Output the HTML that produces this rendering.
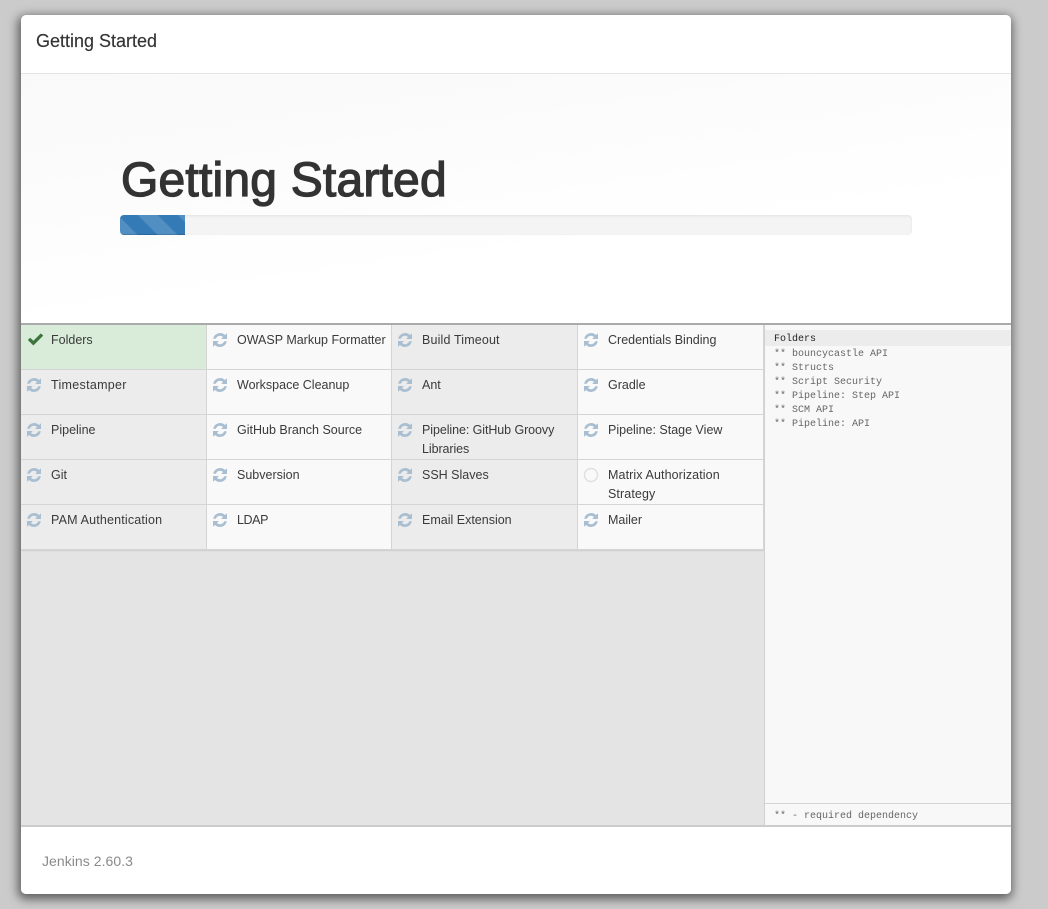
<!DOCTYPE html>
<html><head><meta charset="utf-8"><title>Getting Started</title>
<style>
*{box-sizing:border-box}
html,body{margin:0;padding:0;width:1048px;height:909px;overflow:hidden;background:#cbcbcb;font-family:"Liberation Sans",sans-serif}
#m{position:absolute;left:21px;top:15px;width:990px;height:879px;background:#fff;border-radius:5px;box-shadow:-1px 3px 10px 2px rgba(0,0,0,.55);overflow:hidden}
#hd{position:absolute;left:0;top:0;width:990px;height:59px;border-bottom:1px solid #e5e5e5;font-size:18px;color:#333;line-height:53px;padding-left:15px;-webkit-text-stroke:.15px #333}
#gr{position:absolute;left:0;top:59px;width:990px;height:249px;background:linear-gradient(172deg,#f9f9f9 0,#fbfbfb 25%,#fff 65%,#fff 100%)}
h1{position:absolute;left:100px;top:139px;margin:0;font-size:48px;line-height:54px;font-weight:normal;-webkit-text-stroke:1.300px #333;color:#333;letter-spacing:.2px;white-space:nowrap}
#pb{position:absolute;left:99px;top:200px;width:792px;height:20px;background:#f4f4f4;border-radius:4px;box-shadow:inset 0 1px 2px rgba(0,0,0,.08);overflow:hidden}
#pb div{width:65px;height:20px;background-color:#337ab7;background-image:linear-gradient(45deg,rgba(255,255,255,.15) 25%,transparent 25%,transparent 50%,rgba(255,255,255,.15) 50%,rgba(255,255,255,.15) 75%,transparent 75%,transparent);background-size:40px 40px;background-position:18px 0;box-shadow:inset 0 -1px 0 rgba(0,0,0,.15)}
#st{position:absolute;left:0;top:308px;width:990px;height:503px;background:#e4e4e4;border-top:2px solid #aaa}
.c{position:absolute;height:45px;border-right:1px solid #d5d5d5;border-bottom:1px solid #d5d5d5;font-size:12.5px;line-height:19px;color:#3a3a3a}
.o{background:#ececec}.e{background:#f9f9f9}.g{background:#d9ecd9}
.c span{position:absolute;left:30px;top:5.500px;white-space:nowrap}
.c svg{position:absolute;left:4.500px;top:7px}
#lg{position:absolute;left:743px;top:0;width:247px;height:501px;background:#f8f8f8;border-left:1px solid #d0d0d0;font-family:"Liberation Mono",monospace;font-size:10px;line-height:14px;color:#666}
#lg div{padding-left:9px;white-space:nowrap;height:14px;position:relative;top:6px}
#lg .h{background:#ececec;color:#222;height:16px;line-height:20px;margin-top:1px;top:4px}
#lg #rq{position:absolute;left:0;top:478px;width:246px;height:23px;border-top:1px solid #d4d4d4;line-height:26px}
#ft{position:absolute;left:0;top:810px;width:990px;height:69px;background:#fff;border-top:2px solid #ccc;font-size:14px;color:#8a8a8a;line-height:69px;padding-left:21px;letter-spacing:.05px}
</style></head><body>
<svg width="0" height="0" style="position:absolute"><defs>
<symbol id="r" viewBox="0 0 16 16"><path d="M1.200 6.800A7 7 0 0 1 13 3L15 1.200V7H9.200L11 5A4.400 4.400 0 0 0 3.800 6.800Z M14.800 9.200A7 7 0 0 1 3 13L1 14.800V9H6.800L5 11A4.400 4.400 0 0 0 12.200 9.200Z" fill="#a9bfd1"/></symbol>
</defs></svg>
<div id="m">
<div id="hd">Getting Started</div>
<div id="gr"></div>
<h1>Getting Started</h1>
<div id="pb"><div></div></div>
<div id="st">
<div class="c g" style="left:0;top:0;width:186px"><svg width="17" height="17" viewBox="0 0 16 16" style="left:5.500px;top:6px"><path d="M.800 8.500 6 13.700 15.300 4.300 13 2.200 6 9.200 3 6.300Z" fill="#3c763d"/></svg><span>Folders</span></div>
<div class="c e" style="left:186px;top:0;width:185px"><svg width="16" height="16"><use href="#r"/></svg><span>OWASP Markup Formatter</span></div>
<div class="c o" style="left:371px;top:0;width:186px"><svg width="16" height="16"><use href="#r"/></svg><span style="letter-spacing:.15px">Build Timeout</span></div>
<div class="c e" style="left:557px;top:0;width:186px"><svg width="16" height="16"><use href="#r"/></svg><span>Credentials Binding</span></div>
<div class="c o" style="left:0;top:45px;width:186px"><svg width="16" height="16"><use href="#r"/></svg><span style="letter-spacing:.3px">Timestamper</span></div>
<div class="c e" style="left:186px;top:45px;width:185px"><svg width="16" height="16"><use href="#r"/></svg><span>Workspace Cleanup</span></div>
<div class="c o" style="left:371px;top:45px;width:186px"><svg width="16" height="16"><use href="#r"/></svg><span>Ant</span></div>
<div class="c e" style="left:557px;top:45px;width:186px"><svg width="16" height="16"><use href="#r"/></svg><span>Gradle</span></div>
<div class="c o" style="left:0;top:90px;width:186px"><svg width="16" height="16"><use href="#r"/></svg><span>Pipeline</span></div>
<div class="c e" style="left:186px;top:90px;width:185px"><svg width="16" height="16"><use href="#r"/></svg><span>GitHub Branch Source</span></div>
<div class="c o" style="left:371px;top:90px;width:186px"><svg width="16" height="16"><use href="#r"/></svg><span style="letter-spacing:-.08px">Pipeline: GitHub Groovy<br>Libraries</span></div>
<div class="c e" style="left:557px;top:90px;width:186px"><svg width="16" height="16"><use href="#r"/></svg><span>Pipeline: Stage View</span></div>
<div class="c o" style="left:0;top:135px;width:186px"><svg width="16" height="16"><use href="#r"/></svg><span>Git</span></div>
<div class="c e" style="left:186px;top:135px;width:185px"><svg width="16" height="16"><use href="#r"/></svg><span>Subversion</span></div>
<div class="c o" style="left:371px;top:135px;width:186px"><svg width="16" height="16"><use href="#r"/></svg><span>SSH Slaves</span></div>
<div class="c e" style="left:557px;top:135px;width:186px"><svg width="16" height="16"><circle cx="8" cy="8" r="6.500" fill="none" stroke="#e0e0e0" stroke-width="1.500"/></svg><span style="letter-spacing:.1px">Matrix Authorization<br>Strategy</span></div>
<div class="c o" style="left:0;top:180px;width:186px;box-shadow:0 1px 1px #ccc"><svg width="16" height="16"><use href="#r"/></svg><span style="letter-spacing:.17px">PAM Authentication</span></div>
<div class="c e" style="left:186px;top:180px;width:185px;box-shadow:0 1px 1px #ccc"><svg width="16" height="16"><use href="#r"/></svg><span style="letter-spacing:-.4px">LDAP</span></div>
<div class="c o" style="left:371px;top:180px;width:186px;box-shadow:0 1px 1px #ccc"><svg width="16" height="16"><use href="#r"/></svg><span>Email Extension</span></div>
<div class="c e" style="left:557px;top:180px;width:186px;box-shadow:0 1px 1px #ccc"><svg width="16" height="16"><use href="#r"/></svg><span>Mailer</span></div>
<div id="lg">
<div class="h">Folders</div>
<div>** bouncycastle API</div>
<div>** Structs</div>
<div>** Script Security</div>
<div>** Pipeline: Step API</div>
<div>** SCM API</div>
<div>** Pipeline: API</div>
<div id="rq" style="top:478px">** - required dependency</div>
</div>
</div>
<div id="ft">Jenkins 2.60.3</div>
</div>
</body></html>
